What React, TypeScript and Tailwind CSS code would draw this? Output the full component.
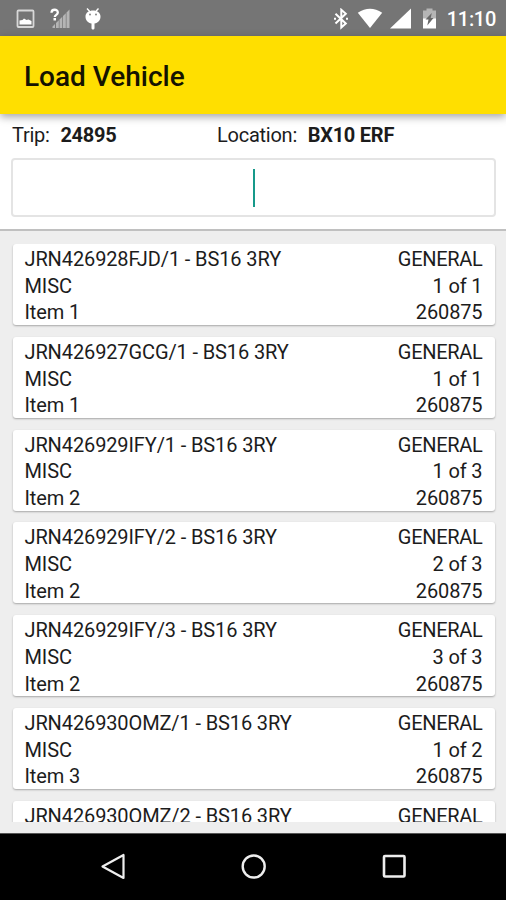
import React from 'react';

const items = [
  { ref: 'JRN426928FJD/1 - BS16 3RY', name: 'Item 1', count: '1 of 1' },
  { ref: 'JRN426927GCG/1 - BS16 3RY', name: 'Item 1', count: '1 of 1' },
  { ref: 'JRN426929IFY/1 - BS16 3RY', name: 'Item 2', count: '1 of 3' },
  { ref: 'JRN426929IFY/2 - BS16 3RY', name: 'Item 2', count: '2 of 3' },
  { ref: 'JRN426929IFY/3 - BS16 3RY', name: 'Item 2', count: '3 of 3' },
  { ref: 'JRN426930OMZ/1 - BS16 3RY', name: 'Item 3', count: '1 of 2' },
];

const StatusBar = () => (
  <div className="flex h-9 shrink-0 items-center justify-between bg-[#757575] pl-4 pr-[10px] pt-px text-white">
    <div className="flex items-center">
      {/* Screenshot notification */}
      <svg className="h-5 w-[19px]" viewBox="0 0 19 20" fill="none">
        <rect x="1.5" y="1.5" width="16" height="16.5" rx="1" stroke="#d8d8d8" strokeWidth="1.8" />
        <path d="M3.5 15.5v-4l3-.5 1.500-1.500 2.500 1.500 2-.5 3 1.500v3.500z" fill="#fff" />
      </svg>
      {/* Unknown mobile signal */}
      <svg className="ml-[15px] h-[22px] w-5" viewBox="0 0 20 22">
        <path d="M1.5 4.8C1.5.8 7.8.8 7.8 4.500c0 2.500-3 2.200-3 4.500" fill="none" stroke="#fff" strokeWidth="2.300" />
        <rect x="3.5" y="10" width="2.500" height="2.500" fill="#fff" />
        <path d="M2.500 20v-1.500l2.500-2.500v4zM6 20v-5l2.800-2.800V20zM9.500 20v-8.500l2.800-2.800V20zM13 20V8l2.800-2.800V20zM16.500 20V4.500L19.500 1.500V20z" fill="#b5b5b5" />
      </svg>
      {/* Debug bridge */}
      <svg className="ml-[14px] h-[22px] w-[18px]" viewBox="0 0 18 22">
        <path d="M3 .500l3 3.200M14.500.500l-3 3.200" stroke="#fff" strokeWidth="1.400" />
        <path d="M1.500 8.500c0-8 15-8 15 0 0 4-2.500 6.500-6 7V20c0 2-3 2-3 0v-4.500c-3.500-.5-6-3-6-7z" fill="#fff" />
        <circle cx="6" cy="6.500" r="1" fill="#858585" />
        <circle cx="12" cy="6.500" r="1" fill="#858585" />
      </svg>
    </div>
    <div className="flex items-center">
      <svg className="h-[22px] w-[14px]" viewBox="0 0 14 22" fill="none" stroke="#fff" strokeWidth="2">
        <path d="M1.500 5.800L11.800 15.500L7.300 19.500V1.800L11.800 5.800L1.500 15.500" />
        <path d="M1 9.800v2M13 9.800v2" />
      </svg>
      <svg className="ml-[9px] h-[22px] w-[26px]" viewBox="0 0 26 22" fill="#fff">
        <path d="M.800 4.800Q13-3.200 25.200 4.800L13 20z" />
      </svg>
      <svg className="ml-[6px] h-[22px] w-[23px]" viewBox="0 0 23 22" fill="#fff">
        <path d="M1 20.500L22 .500v20z" />
      </svg>
      {/* Charging battery */}
      <svg className="ml-[10px] h-[22px] w-[15px]" viewBox="0 0 15 22">
        <path d="M1 2.500h3.500V.500h6v2H14V12H1z" fill="#b5b5b5" />
        <path d="M1 10.500h13V20.500H1z" fill="#fff" />
        <path d="M9.800 5L3.500 11.500h3l-1.200 6 6.200-7.500H8.700z" fill="#686868" />
      </svg>
      <span className="ml-[10px] text-[20px] font-medium leading-none tracking-[-0.3px]">11:10</span>
    </div>
  </div>
);

const NavBar = () => (
  <div className="flex h-[67px] shrink-0 items-center border-t border-[#555] bg-black pl-[98px]">
    <svg className="h-7 w-7" viewBox="0 0 28 28" fill="none" stroke="#eee" strokeWidth="2.200">
      <path d="M4.500 13.500L25.500 2v23z" strokeLinejoin="round" />
    </svg>
    <svg className="ml-[114px] h-7 w-7" viewBox="0 0 28 28" fill="none" stroke="#eee" strokeWidth="2.400">
      <circle cx="13.700" cy="13.500" r="11" />
    </svg>
    <svg className="ml-[112px] h-7 w-7" viewBox="0 0 28 28" fill="none" stroke="#eee" strokeWidth="2.600">
      <rect x="4" y="3" width="20.500" height="20.500" rx="1" />
    </svg>
  </div>
);

const App = () => {
  return (
    <div className="flex h-[900px] w-[506px] flex-col overflow-hidden bg-[#eeeeee] font-['Roboto',sans-serif] text-[20px] tracking-[-0.120px] text-[#1c1c1c]">
      <StatusBar />

      <header className="z-10 flex h-[78px] shrink-0 items-center bg-[#ffdf00] pl-6 pt-1 shadow-[0_3px_8px_rgba(0,0,0,0.35)]">
        <h1 className="text-[28px] font-medium leading-8 tracking-normal text-[#151300]">Load Vehicle</h1>
      </header>

      <section className="h-[117px] shrink-0 border-b-2 border-[#c0c0c0] bg-white pl-[11px] pr-[10px] pt-2">
        <div className="flex pl-px leading-[26px] tracking-[-0.250px]">
          <div className="w-[205px]">
            Trip: <b className="ml-[6px] font-bold">24895</b>
          </div>
          <div>
            Location: <b className="ml-[6px] font-bold">BX10 ERF</b>
          </div>
        </div>
        <div className="mt-[10px] flex h-[59px] items-center justify-center rounded-[4px] border-2 border-[#e4e4e4]">
          <div className="h-[38px] w-[2px] bg-[#16998a]" />
        </div>
      </section>

      <main className="mt-[13px] flex h-[578px] shrink-0 flex-col gap-[11.8px] overflow-hidden pl-[12.5px] pr-[11.5px]">
        {items.map((item) => (
          <div
            key={item.ref}
            className="flex h-[81px] shrink-0 justify-between rounded-[3px] bg-white px-3 pt-[2px] leading-[26.700px] shadow-[0_1px_2px_rgba(0,0,0,0.3)]"
          >
            <div>
              <p>{item.ref}</p>
              <p>MISC</p>
              <p>{item.name}</p>
            </div>
            <div className="text-right">
              <p className="tracking-[-0.300px]">GENERAL</p>
              <p>{item.count}</p>
              <p>260875</p>
            </div>
          </div>
        ))}
        {/* Partly scrolled into view */}
        <div className="flex h-[81px] shrink-0 justify-between rounded-[3px] bg-white px-3 pt-[2px] leading-[26.700px] shadow-[0_1px_2px_rgba(0,0,0,0.3)]">
          <p>JRN426930OMZ/2 - BS16 3RY</p>
          <p className="tracking-[-0.300px]">GENERAL</p>
        </div>
      </main>

      <div className="h-[11px] shrink-0" />
      <NavBar />
    </div>
  );
};

export default App;
